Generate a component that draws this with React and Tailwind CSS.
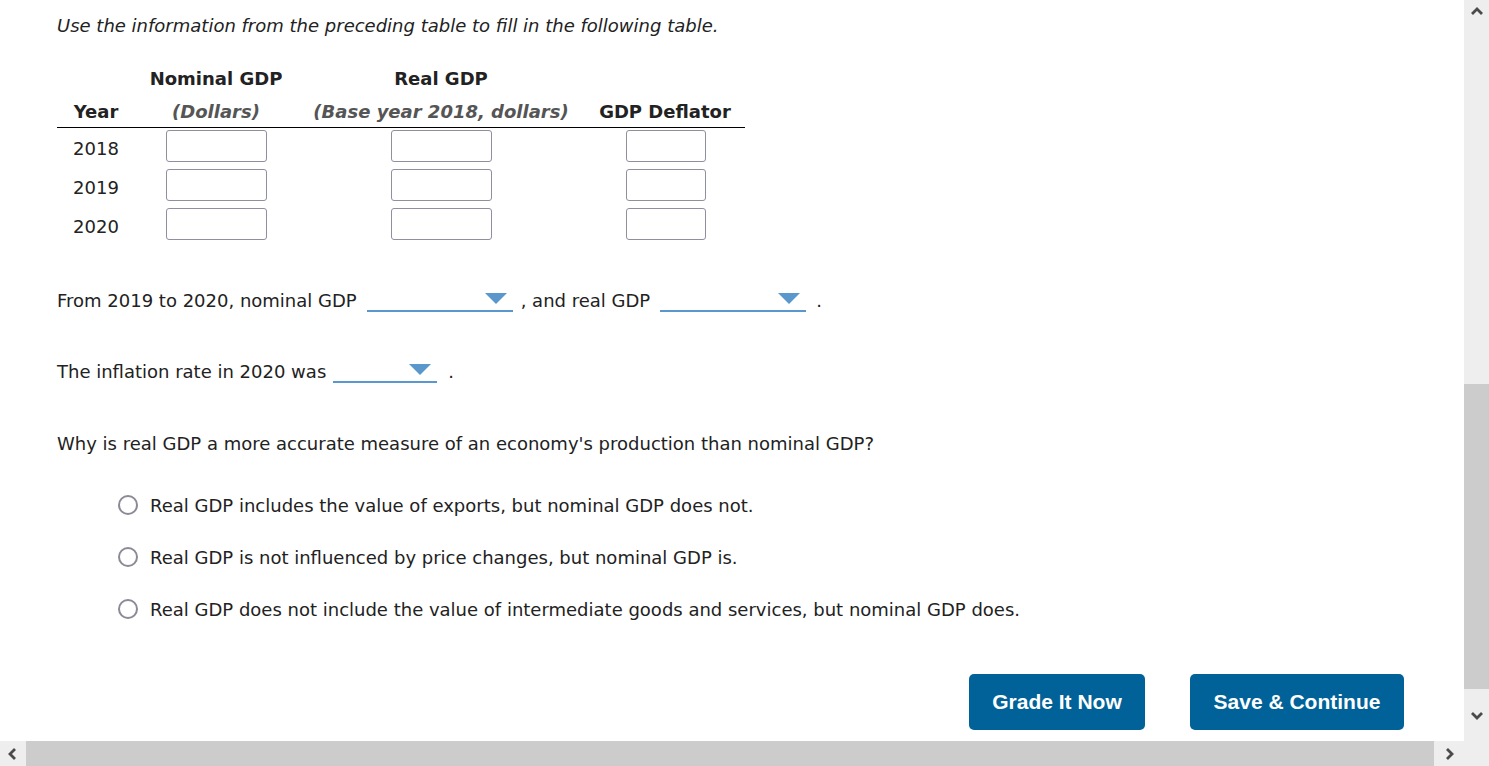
import React from 'react';

const years = ['2018', '2019', '2020'];

const Dropdown = ({ width }) => (
  <span className={`relative inline-block h-[20px] border-b-2 border-[#5a97cc] ${width}`}>
    <svg className="absolute right-[6px] top-[1px]" width="22" height="11" viewBox="0 0 22 11">
      <polygon points="0,0 22,0 11,11" fill="#5a97cc" />
    </svg>
  </span>
);

const Radio = ({ label }) => (
  <div className="flex items-center h-[24px] pl-[61px]">
    <span className="w-[20px] h-[20px] rounded-full border-[2.5px] border-[#8b8b96] bg-white shrink-0" />
    <span className="ml-[12px]">{label}</span>
  </div>
);

const Chevron = ({ points }) => (
  <svg width="12" height="12" viewBox="0 0 12 12">
    <polyline points={points} fill="none" stroke="#4a4a4a" strokeWidth="2.8" />
  </svg>
);

const App = () => {
  return (
    <div className="w-[1489px] h-[766px] flex flex-col bg-white overflow-hidden text-[#222] text-[18px]" style={{ fontFamily: '"DejaVu Sans", Verdana, sans-serif' }}>
      <div className="flex flex-1 min-h-0">
        {/* page content */}
        <div className="flex-1 pl-[57px]">
          <div className="h-[50px] flex items-center italic">
            Use the information from the preceding table to fill in the following table.
          </div>

          {/* table */}
          <div className="mt-[11px] w-[688px]">
            <div className="grid grid-cols-[78px_162px_288px_160px] h-[34px] items-center font-bold text-center">
              <div></div>
              <div>Nominal GDP</div>
              <div>Real GDP</div>
              <div></div>
            </div>
            <div className="grid grid-cols-[78px_162px_288px_160px] h-[33px] items-center text-center border-b border-black">
              <div className="font-bold">Year</div>
              <div className="italic font-bold text-[#555]">(Dollars)</div>
              <div className="italic font-bold text-[#555]">(Base year 2018, dollars)</div>
              <div className="font-bold">GDP Deflator</div>
            </div>
            {years.map((y) => (
              <div key={y} className="grid grid-cols-[78px_162px_288px_160px] h-[39px] pt-[2px] items-start text-center">
                <div className="pt-[5px]">{y}</div>
                <div className="flex justify-center">
                  <span className="w-[101px] h-[32px] border border-[#8f8f9d] rounded-[3px]" />
                </div>
                <div className="flex justify-center">
                  <span className="w-[101px] h-[32px] border border-[#8f8f9d] rounded-[3px]" />
                </div>
                <div className="flex justify-center pl-[2px]">
                  <span className="w-[80px] h-[32px] border border-[#8f8f9d] rounded-[3px]" />
                </div>
              </div>
            ))}
          </div>

          {/* fill-in sentences */}
          <div className="mt-[43px] h-[24px] flex items-center">
            <span>From 2019 to 2020, nominal GDP</span>
            <span className="ml-[10px] mt-[4px] flex"><Dropdown width="w-[146px]" /></span>
            <span className="ml-[8px]">, and real GDP</span>
            <span className="ml-[10px] mt-[4px] flex"><Dropdown width="w-[146px]" /></span>
            <span className="ml-[10px]">.</span>
          </div>

          <div className="mt-[47px] h-[24px] flex items-center">
            <span>The inflation rate in 2020 was</span>
            <span className="ml-[7px] mt-[4px] flex"><Dropdown width="w-[104px]" /></span>
            <span className="ml-[11px]">.</span>
          </div>

          <div className="mt-[48px] h-[24px] flex items-center">
            Why is real GDP a more accurate measure of an economy's production than nominal GDP?
          </div>

          <div className="mt-[38px] flex flex-col gap-[28px]">
            <Radio label="Real GDP includes the value of exports, but nominal GDP does not." />
            <Radio label="Real GDP is not influenced by price changes, but nominal GDP is." />
            <Radio label="Real GDP does not include the value of intermediate goods and services, but nominal GDP does." />
          </div>

          <div className="mt-[53px] flex justify-end gap-[45px] pr-[60px]" style={{ fontFamily: '"Liberation Sans", Arial, sans-serif' }}>
            <button className="w-[176px] h-[56px] rounded-[5px] bg-[#006298] text-white font-bold text-[21px]">Grade It Now</button>
            <button className="w-[214px] h-[56px] rounded-[5px] bg-[#006298] text-white font-bold text-[21px]">Save &amp; Continue</button>
          </div>
        </div>

        {/* vertical scrollbar */}
        <div className="w-[25px] bg-[#eeeeee] flex flex-col">
          <div className="h-[24px] flex items-center justify-center"><Chevron points="1,8 6,3 11,8" /></div>
          <div className="h-[360px]" />
          <div className="h-[305px] bg-[#cccccc]" />
          <div className="flex-1 flex items-center justify-center"><Chevron points="1,4 6,9 11,4" /></div>
        </div>
      </div>

      {/* horizontal scrollbar */}
      <div className="h-[25px] flex bg-[#eeeeee]">
        <div className="w-[26px] flex items-center justify-center"><Chevron points="8,1 3,6 8,11" /></div>
        <div className="w-[1408px] bg-[#cccccc]" />
        <div className="w-[30px] flex items-center justify-center"><Chevron points="4,1 9,6 4,11" /></div>
        <div className="flex-1" />
      </div>
    </div>
  );
};

export default App;
